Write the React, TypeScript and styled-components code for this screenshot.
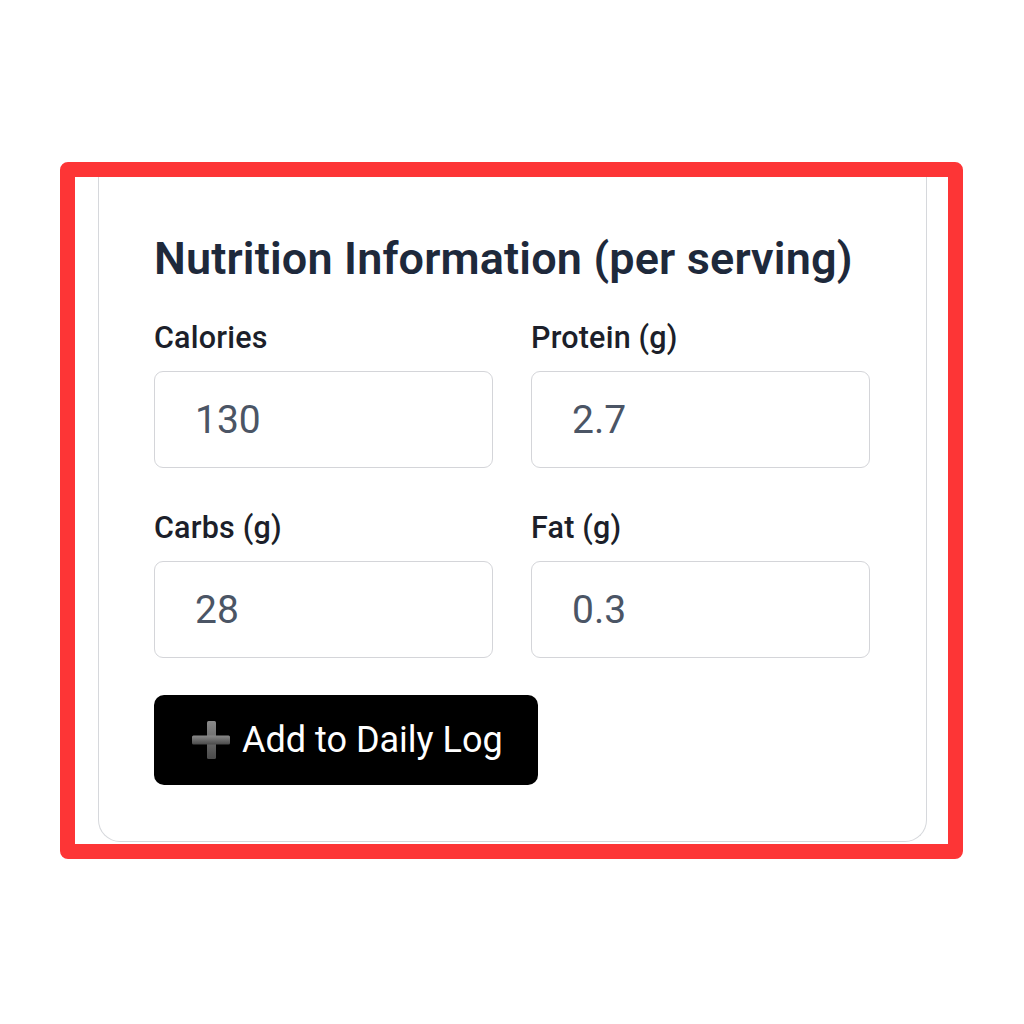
import React from "react";
import styled, { createGlobalStyle } from "styled-components";

const GlobalStyle = createGlobalStyle`
  html, body {
    margin: 0;
    padding: 0;
    background: #ffffff;
    font-family: Roboto, "Liberation Sans", Arial, sans-serif;
  }
  * {
    box-sizing: border-box;
  }
`;

const Page = styled.div`
  width: 1024px;
  height: 1024px;
  padding: 162px 0 0 60px;
`;

const Highlight = styled.div`
  width: 903px;
  border: 15px solid #fd3536;
  border-radius: 8px;
  padding: 0 21px 2px 23px;
`;

const Card = styled.section`
  background: #ffffff;
  border: 1.5px solid #d6d8dc;
  border-top: none;
  border-radius: 0 0 22px 22px;
  padding: 55px 56px 56px 55px;
`;

const Heading = styled.h2`
  margin: 0 0 34px;
  font-size: 45px;
  line-height: 54px;
  font-weight: 600;
  letter-spacing: 0.15px;
  color: #1e293b;
`;

const FieldGrid = styled.div`
  display: grid;
  grid-template-columns: 339px 339px;
  column-gap: 38px;
  row-gap: 42px;
`;

const Field = styled.label`
  display: flex;
  flex-direction: column;
  gap: 15px;
`;

const FieldLabel = styled.span`
  font-size: 30.5px;
  line-height: 36px;
  font-weight: 500;
  letter-spacing: 0.2px;
  color: #1c1f2a;
`;

const ValueInput = styled.input`
  height: 97px;
  width: 100%;
  border: 1.5px solid #d4d5d9;
  border-radius: 9px;
  padding: 0 0 0 40px;
  font-family: Roboto, "Liberation Sans", Arial, sans-serif;
  font-size: 39px;
  color: #4b5565;
  background: #ffffff;
  outline: none;
`;

const AddButton = styled.button`
  margin-top: 37px;
  height: 90px;
  width: 384px;
  display: flex;
  align-items: center;
  gap: 12px;
  padding: 0 0 0 38px;
  background: #000000;
  color: #ffffff;
  border: none;
  border-radius: 10px;
  font-family: Roboto, "Liberation Sans", Arial, sans-serif;
  font-size: 36px;
  font-weight: 400;
  cursor: pointer;
`;

const PlusIcon = () => (
  <svg width="38" height="38" viewBox="0 0 38 38" aria-hidden="true">
    <defs>
      <linearGradient id="plusShade" x1="0" y1="0" x2="0" y2="1">
        <stop offset="0" stopColor="#8a8a8a" />
        <stop offset="1" stopColor="#4a4a4a" />
      </linearGradient>
    </defs>
    <rect x="15" y="0" width="9" height="38" rx="1.5" fill="url(#plusShade)" />
    <rect x="0" y="14.5" width="38" height="9" rx="1.5" fill="url(#plusShade)" />
  </svg>
);

type Nutrient = { label: string; value: string };

const nutrients: Nutrient[] = [
  { label: "Calories", value: "130" },
  { label: "Protein (g)", value: "2.7" },
  { label: "Carbs (g)", value: "28" },
  { label: "Fat (g)", value: "0.3" },
];

export default function App() {
  return (
    <>
      <GlobalStyle />
      <Page>
        <Highlight>
          <Card>
            <Heading>Nutrition Information (per serving)</Heading>
            <FieldGrid>
              {nutrients.map((n) => (
                <Field key={n.label}>
                  <FieldLabel>{n.label}</FieldLabel>
                  <ValueInput readOnly value={n.value} />
                </Field>
              ))}
            </FieldGrid>
            <AddButton type="button">
              <PlusIcon />
              Add to Daily Log
            </AddButton>
          </Card>
        </Highlight>
      </Page>
    </>
  );
}
